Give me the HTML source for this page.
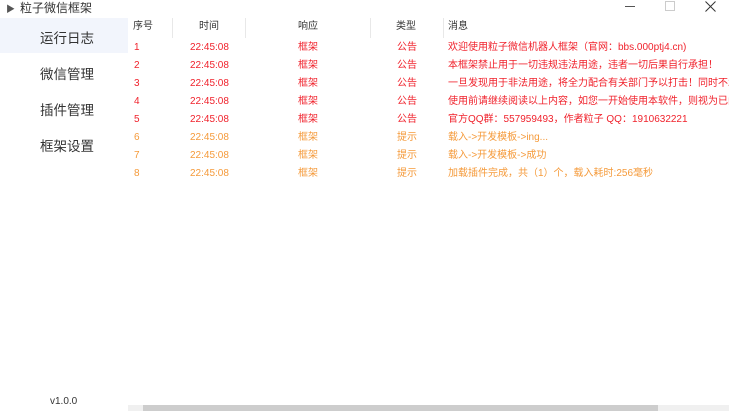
<!DOCTYPE html>
<html><head><meta charset="utf-8"><style>
*{margin:0;padding:0;box-sizing:border-box}
body{width:729px;height:411px;background:#fff;position:relative;overflow:hidden;font-family:"Liberation Sans","Noto Sans CJK SC",sans-serif;color:#333}
.a{position:absolute;white-space:nowrap}
.t{font-size:10px;line-height:12px}
.r{color:#f0222c}.o{color:#f59a3a}
.m{font-size:13.5px;left:40px;color:#333}
.sep{position:absolute;top:18px;width:1px;height:20px;background:#e8e8e8}
</style></head><body>
<div class="a" style="left:6px;top:2px;font-size:9px;color:#555">▶</div>
<div class="a" style="left:20px;top:-1px;font-size:12px;color:#333">粒子微信框架</div>
<div class="a" style="left:625px;top:6px;width:10px;height:1px;background:#555"></div>
<div class="a" style="left:665px;top:1px;width:10px;height:10px;border:1px solid #ccc"></div>
<svg class="a" style="left:705px;top:1px" width="11" height="11"><path d="M0.5 0.5L10.5 10.5M10.5 0.5L0.5 10.5" stroke="#333" stroke-width="1"/></svg>
<div class="a" style="left:0;top:18px;width:128px;height:35px;background:#f2f5fc"></div>
<div class="a m" style="top:27px">运行日志</div>
<div class="a m" style="top:63px">微信管理</div>
<div class="a m" style="top:99px">插件管理</div>
<div class="a m" style="top:135px">框架设置</div>
<div class="a" style="left:50px;top:396px;font-size:10px;color:#333">v1.0.0</div>
<div class="sep" style="left:172px"></div><div class="sep" style="left:245px"></div><div class="sep" style="left:370px"></div><div class="sep" style="left:443px"></div>
<div class="a t" style="left:133px;top:21px">序号</div>
<div class="a t" style="left:199px;top:21px">时间</div>
<div class="a t" style="left:298px;top:21px">响应</div>
<div class="a t" style="left:396px;top:21px">类型</div>
<div class="a t" style="left:448px;top:21px">消息</div>
<div class="a t r" style="left:134px;top:42px">1</div><div class="a t r" style="left:190px;top:42px">22:45:08</div><div class="a t r" style="left:298px;top:42px">框架</div><div class="a t r" style="left:397px;top:42px">公告</div><div class="a t r" style="left:448px;top:42px">欢迎使用粒子微信机器人框架（官网：bbs.000ptj4.cn)</div>
<div class="a t r" style="left:134px;top:60px">2</div><div class="a t r" style="left:190px;top:60px">22:45:08</div><div class="a t r" style="left:298px;top:60px">框架</div><div class="a t r" style="left:397px;top:60px">公告</div><div class="a t r" style="left:448px;top:60px">本框架禁止用于一切违规违法用途，违者一切后果自行承担！</div>
<div class="a t r" style="left:134px;top:78px">3</div><div class="a t r" style="left:190px;top:78px">22:45:08</div><div class="a t r" style="left:298px;top:78px">框架</div><div class="a t r" style="left:397px;top:78px">公告</div><div class="a t r" style="left:448px;top:78px">一旦发现用于非法用途，将全力配合有关部门予以打击！同时不承担</div>
<div class="a t r" style="left:134px;top:96px">4</div><div class="a t r" style="left:190px;top:96px">22:45:08</div><div class="a t r" style="left:298px;top:96px">框架</div><div class="a t r" style="left:397px;top:96px">公告</div><div class="a t r" style="left:448px;top:96px">使用前请继续阅读以上内容，如您一开始使用本软件，则视为已阅</div>
<div class="a t r" style="left:134px;top:114px">5</div><div class="a t r" style="left:190px;top:114px">22:45:08</div><div class="a t r" style="left:298px;top:114px">框架</div><div class="a t r" style="left:397px;top:114px">公告</div><div class="a t r" style="left:448px;top:114px">官方QQ群：557959493，作者粒子 QQ：1910632221</div>
<div class="a t o" style="left:134px;top:132px">6</div><div class="a t o" style="left:190px;top:132px">22:45:08</div><div class="a t o" style="left:298px;top:132px">框架</div><div class="a t o" style="left:397px;top:132px">提示</div><div class="a t o" style="left:448px;top:132px">载入-&gt;开发模板-&gt;ing...</div>
<div class="a t o" style="left:134px;top:150px">7</div><div class="a t o" style="left:190px;top:150px">22:45:08</div><div class="a t o" style="left:298px;top:150px">框架</div><div class="a t o" style="left:397px;top:150px">提示</div><div class="a t o" style="left:448px;top:150px">载入-&gt;开发模板-&gt;成功</div>
<div class="a t o" style="left:134px;top:168px">8</div><div class="a t o" style="left:190px;top:168px">22:45:08</div><div class="a t o" style="left:298px;top:168px">框架</div><div class="a t o" style="left:397px;top:168px">提示</div><div class="a t o" style="left:448px;top:168px">加载插件完成，共（1）个，载入耗时:256毫秒</div>
<div class="a" style="left:128px;top:405px;width:601px;height:6px;background:#f0f0f0"></div>
<div class="a" style="left:143px;top:405px;width:515px;height:6px;background:#cdcdcd"></div>
</body></html>
